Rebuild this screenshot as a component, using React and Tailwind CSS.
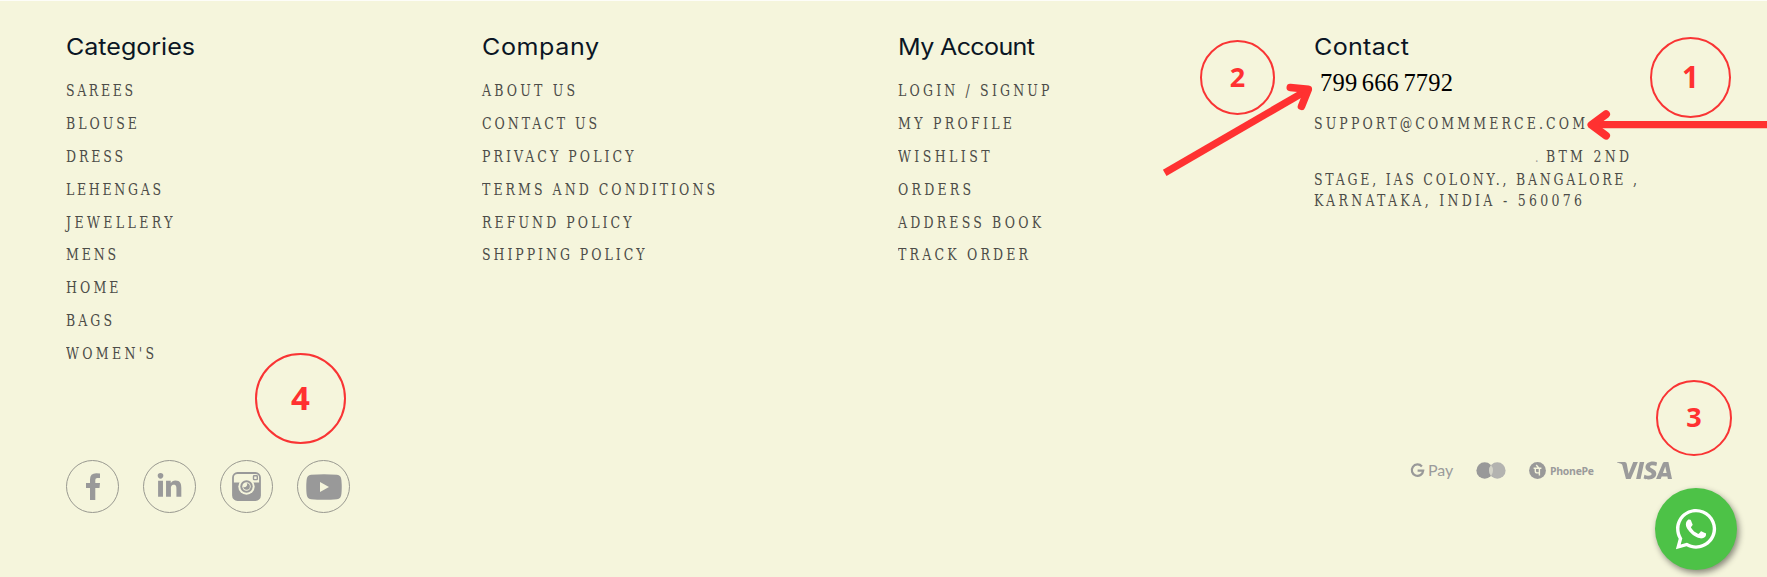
import { useLayoutEffect, useRef } from "react";
import { FaWhatsapp, FaLinkedinIn } from "react-icons/fa";
import { SiVisa } from "react-icons/si";

// Tracks a line of text out to a given width; stretch widens or condenses the letters.
function Tracked({ text, width, stretch = 1, className = "" }) {
  const ref = useRef(null);
  useLayoutEffect(() => {
    const el = ref.current;
    el.style.letterSpacing = "0px";
    el.style.transform = `scaleX(${stretch})`;
    const natural = el.getBoundingClientRect().width;
    el.style.letterSpacing = `${(width - natural) / (text.length - 1) / stretch}px`;
  }, [text, width, stretch]);
  return (
    <span ref={ref} className={`inline-block origin-left self-start whitespace-pre ${className}`}>
      {text}
    </span>
  );
}

const columns = [
  {
    title: ["Categories", 129],
    links: [
      ["SAREES", 67],
      ["BLOUSE", 71],
      ["DRESS", 57],
      ["LEHENGAS", 95],
      ["JEWELLERY", 106.5],
      ["MENS", 50],
      ["HOME", 52.5],
      ["BAGS", 46],
      ["WOMEN'S", 88],
    ],
  },
  {
    title: ["Company", 117],
    links: [
      ["ABOUT US", 93],
      ["CONTACT US", 115],
      ["PRIVACY POLICY", 151.5],
      ["TERMS AND CONDITIONS", 233],
      ["REFUND POLICY", 149.5],
      ["SHIPPING POLICY", 162.5],
    ],
  },
  {
    title: ["My Account", 137],
    links: [
      ["LOGIN / SIGNUP", 151.5],
      ["MY PROFILE", 114],
      ["WISHLIST", 91.5],
      ["ORDERS", 73],
      ["ADDRESS BOOK", 143],
      ["TRACK ORDER", 130],
    ],
  },
];

function Heading({ title }) {
  return (
    <h3 className="h-9 font-['Inter',sans-serif] text-[23px] leading-9 text-[#0b1524]">
      <Tracked text={title[0]} width={title[1]} stretch={1.09} />
    </h3>
  );
}

function LinkColumn({ title, links }) {
  return (
    <div>
      <Heading title={title} />
      <ul className="mt-[15px]">
        {links.map(([text, width]) => (
          <li key={text} className="h-[32.9px] leading-[21px]">
            <Tracked text={text} width={width} stretch={0.87} />
          </li>
        ))}
      </ul>
    </div>
  );
}

function Social({ children }) {
  return (
    <a className="flex size-[53px] items-center justify-center rounded-full border border-[#999990] text-[#9a9a9a]">
      {children}
    </a>
  );
}

function InstagramCamera() {
  return (
    <svg viewBox="0 0 29 29" className="size-[29px]">
      <rect x="1" y="1" width="27" height="27" rx="4.5" fill="none" stroke="#999" strokeWidth="1.8" />
      <path d="M1 10.5H28V24a4 4 0 0 1-4 4H5a4 4 0 0 1-4-4Z" fill="#999" />
      <rect x="21.5" y="3.8" width="3.8" height="3.8" rx="0.6" fill="none" stroke="#999" strokeWidth="1.4" />
      <circle cx="14.5" cy="14.5" r="8.2" fill="#f5f5dc" />
      <circle cx="14.5" cy="14.5" r="6.2" fill="#999" />
      <circle cx="14.5" cy="14.5" r="4.2" fill="#f5f5dc" />
      <path d="M14.8 11.2a3.3 3.3 0 1 1-3.5 3.6 2.6 2.6 0 0 0 3.5-3.6Z" fill="#999" />
    </svg>
  );
}

function Marker({ children, className }) {
  return (
    <div
      className={`absolute flex items-center justify-center rounded-full border-[#f93434] font-['Open_Sans',sans-serif] font-bold text-[#ff3131] ${className}`}
    >
      {children}
    </div>
  );
}

export default function App() {
  return (
    <footer className="relative flex h-[577px] w-[1767px] flex-col overflow-hidden border-t border-[#fdfdf8] bg-[#f5f5dc] px-[66px] pt-[28px] font-['DejaVu_Serif_Condensed','DejaVu_Serif',serif] text-[16px] text-[#4c4c48]">
      <div className="grid h-[431px] shrink-0 grid-cols-[416px_416px_416px_1fr]">
        {columns.map((c) => (
          <LinkColumn key={c.title[0]} {...c} />
        ))}
        <div>
          <Heading title={["Contact", 95]} />
          <p className="h-[48px] pl-[6px] font-['Liberation_Serif',serif] text-[24.5px] leading-[35px] text-black">
            <Tracked text="799 666 7792" width={133} className="[word-spacing:-2px]" />
          </p>
          <p className="h-[32.8px] leading-[21px]">
            <Tracked text="SUPPORT@COMMMERCE.COM" width={271} stretch={0.87} />
          </p>
          <address className="flex flex-col leading-[21px] not-italic">
            <span className="flex pl-[221px]">
              <span className="w-[11px] pt-[2px] text-[12px] text-[#999]">.</span>
              <Tracked text="BTM 2ND" width={83} stretch={0.87} />
            </span>
            <Tracked text="STAGE, IAS COLONY., BANGALORE ," width={323} stretch={0.87} />
            <Tracked text="KARNATAKA, INDIA - 560076" width={268} stretch={0.87} />
          </address>
        </div>
      </div>

      <div className="flex justify-between">
        <div className="flex gap-6">
          <Social>
            <svg viewBox="0 0 14 27" className="h-[27px] w-[14px]">
              <path d="M14 .4V5H11.2Q9.3 5 9.3 7V10H14L13.5 15H9.3V27H4V15H0V10H4V6.5Q4 .3 10.3.3Z" fill="#999" />
            </svg>
          </Social>
          <Social><FaLinkedinIn className="size-[27px]" /></Social>
          <Social><InstagramCamera /></Social>
          <Social>
            <svg viewBox="0 0 36 26" className="h-[26px] w-9">
              <path d="M5 .8Q18-.4 31 .8 35 1 35.4 6q.7 7 0 14-.4 5-4.4 5.2-13 1-26 0Q1 25 .6 20-.1 13 .6 6 1 1 5 .8Z" fill="#999" />
              <path d="M14 8v10l9-5Z" fill="#f5f5dc" />
            </svg>
          </Social>
        </div>

        <div className="-mt-[2px] mr-[29px] flex h-6 items-center text-[#9b9b9b]">
          <div className="-ml-px flex h-5 w-[66px] items-center gap-[3px]">
            <svg viewBox="0 0 15 15" className="size-[15px] shrink-0">
              <path d="M11.9 3.5A5.7 5.7 0 1 0 13.2 7.7H7.6" fill="none" stroke="#999" strokeWidth="2.2" />
            </svg>
            <span className="font-['Lato',sans-serif] text-[16px] leading-5">Pay</span>
          </div>
          <svg viewBox="0 0 30 17" className="h-[17px] w-[30px]">
            <circle cx="8.7" cy="8.5" r="8.3" fill="#999" />
            <circle cx="21.3" cy="8.5" r="8.3" fill="#b3b3b0" />
            <path d="M15 3.1a8.3 8.3 0 0 1 0 10.8 8.3 8.3 0 0 1 0-10.8Z" fill="#d4d4c8" />
          </svg>
          <div className="ml-[23px] flex w-[67px] items-center gap-1">
            <svg viewBox="0 0 17 17" className="size-[17px] shrink-0">
              <circle cx="8.5" cy="8.5" r="8.4" fill="#999" />
              <path
                d="M4.6 6.2H12.4M7.2 3L9.8 6M10.4 6.2V13.6M6.3 6.2V9Q6.3 10.9 8.2 10.9H10.4"
                fill="none"
                stroke="#f5f5dc"
                strokeWidth="1.4"
              />
            </svg>
            <span className="pt-[2px] font-['Open_Sans',sans-serif] text-[11px] leading-4 font-bold">
              <Tracked text="PhonePe" width={44} stretch={0.95} />
            </span>
          </div>
          <div className="ml-[21px] w-[55px]">
            <SiVisa className="h-[55px] w-[55px]" />
          </div>
        </div>
      </div>

      <svg viewBox="0 0 1767 577" className="pointer-events-none absolute -top-px left-0 h-[577px] w-[1767px]">
        <g fill="none" stroke="#ff3131" strokeLinejoin="round">
          <path d="M1767 124.7H1592" strokeWidth="7.2" />
          <path d="M1606 114.2L1591.5 124.9L1606 135.6" strokeWidth="8" strokeLinecap="round" />
          <path d="M1164.7 172.9L1307 90.3" strokeWidth="7.2" />
          <path d="M1290.3 87.5L1308.3 89.3L1301.5 106.3" strokeWidth="7.6" strokeLinecap="round" />
        </g>
      </svg>
      <Marker className="top-[36px] left-[1650px] size-[81px] border-2 text-[29.5px]">1</Marker>
      <Marker className="top-[39px] left-[1200px] size-[75px] border-2 text-[27px]">2</Marker>
      <Marker className="top-[378.5px] left-[1656px] size-[76px] border-2 text-[27px]">3</Marker>
      <Marker className="top-[351.5px] left-[255px] size-[91px] border-[2.5px] text-[33px]">4</Marker>

      <a className="absolute top-[487px] left-[1655px] flex size-[82px] items-center justify-center rounded-full bg-[#4dc247] text-white shadow-[2px_3px_6px_rgba(0,0,0,0.45)]">
        <FaWhatsapp className="size-[46px]" />
      </a>
    </footer>
  );
}
